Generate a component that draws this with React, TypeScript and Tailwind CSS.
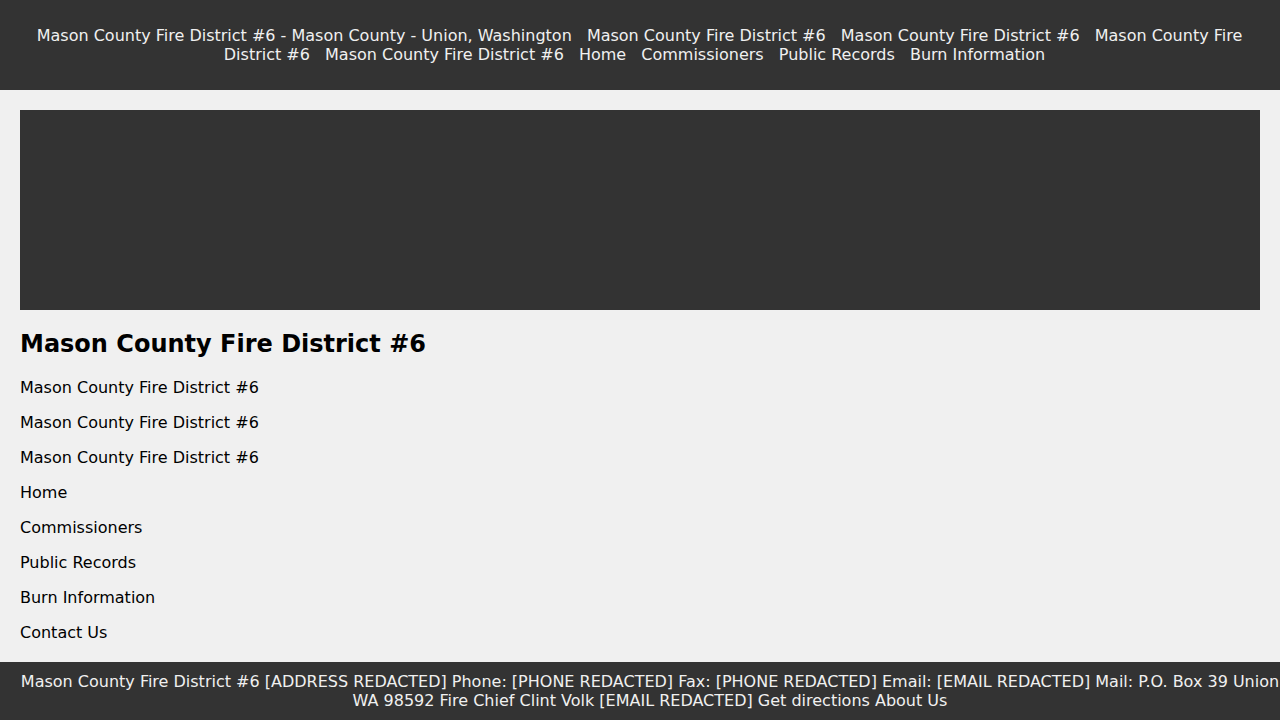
const navLinks = [
  'Mason County Fire District #6',
  'Mason County Fire District #6',
  'Mason County Fire District #6',
  'Mason County Fire District #6',
  'Home',
  'Commissioners',
  'Public Records',
  'Burn Information',
]

const pageLinks = [
  'Mason County Fire District #6',
  'Mason County Fire District #6',
  'Mason County Fire District #6',
  'Home',
  'Commissioners',
  'Public Records',
  'Burn Information',
  'Contact Us',
]

export default function App() {
  return (
    <div className="min-h-screen bg-[#f0f0f0] text-black text-base" style={{ fontFamily: '"DejaVu Sans", sans-serif' }}>
      {/*header*/}
      <header className="bg-[#333333] text-[#f0f0f0] pl-5 pr-[26px] py-[26px] text-center leading-[19px]">
        <span className="mx-[5px]">Mason County Fire District #6 - Mason County - Union, Washington</span>{' '}
        {navLinks.map((item, i) => (
          <span key={i}>
            <a href="#" className="mx-[5px]">
              {item}
            </a>{' '}
          </span>
        ))}
      </header>

      {/*main*/}
      <main className="p-5">
        <div className="h-[200px] bg-[#333333]" />
        <h2 className="mt-5 text-2xl leading-[28px] font-bold">Mason County Fire District #6</h2>
        <div className="mt-5 flex flex-col gap-4 leading-[19px]">
          {pageLinks.map((item, i) => (
            <a key={i} href="#" className="block">
              {item}
            </a>
          ))}
        </div>
      </main>

      {/*footer*/}
      <footer className="bg-[#333333] text-[#f0f0f0] pl-5 py-[10px] text-center leading-[19px]">
        Mason County Fire District #6 [ADDRESS REDACTED] Phone: [PHONE REDACTED] Fax: [PHONE REDACTED] Email: [EMAIL REDACTED] Mail: P.O. Box 39 Union WA 98592 Fire Chief Clint Volk [EMAIL REDACTED] Get directions About Us
      </footer>
    </div>
  )
}
